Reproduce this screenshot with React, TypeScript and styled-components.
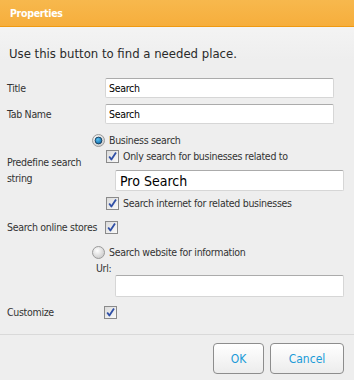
import React from 'react';
import styled, { createGlobalStyle } from 'styled-components';

const GlobalStyle = createGlobalStyle`
  html, body {
    margin: 0;
    padding: 0;
    width: 354px;
    height: 380px;
    overflow: hidden;
  }
  body {
    font-family: "DejaVu Sans Condensed", "DejaVu Sans", "Liberation Sans", sans-serif;
    color: #333;
  }
`;

const Dialog = styled.div`
  width: 354px;
  height: 380px;
  display: flex;
  flex-direction: column;
  background: linear-gradient(#f8f8f8 0px, #eeeeee 60px, #eeeeee 100%);
`;

const Header = styled.div`
  flex: none;
  height: 26px;
  border-bottom: 1px solid #ef9a12;
  background: linear-gradient(#f7b84d, #f6ae3c);
  display: flex;
  align-items: center;
  padding-left: 10px;
  color: #fff;
  font-weight: bold;
  font-size: 10.5px;
  letter-spacing: -0.3px;
`;

const Body = styled.div`
  padding: 0 7px;
  display: flex;
  flex-direction: column;
  flex: 1;
`;

const Intro = styled.div`
  font-size: 13px;
  color: #2a2a2a;
  margin-top: 18px;
  height: 17px;
  line-height: 17px;
  margin-bottom: 16px;
  padding-left: 2px;
`;

const Row = styled.div<{ $mt?: number; $indent?: number }>`
  display: flex;
  align-items: center;
  margin-top: ${(p) => p.$mt ?? 0}px;
  padding-left: ${(p) => p.$indent ?? 0}px;
`;

const Label = styled.div<{ $w?: number }>`
  width: ${(p) => p.$w ?? 98}px;
  flex: none;
  font-size: 10.5px;
  letter-spacing: -0.3px;
  color: #333;
  line-height: 14px;
`;

const TextInput = styled.div<{ $w: number; $h?: number; $big?: boolean }>`
  box-sizing: border-box;
  width: ${(p) => p.$w}px;
  height: ${(p) => p.$h ?? 20}px;
  background: #fff;
  border: 1px solid #d6d6d6;
  border-top-color: #ababab;
  border-radius: 2px;
  display: flex;
  align-items: center;
  padding-left: ${(p) => (p.$big ? 4 : 3)}px;
  font-size: ${(p) => (p.$big ? 14 : 10.5)}px;
  letter-spacing: ${(p) => (p.$big ? 0 : -0.3)}px;
  color: #000;
`;

const OptionText = styled.span`
  font-size: 10.5px;
  letter-spacing: -0.3px;
  color: #333;
  margin-left: 4px;
  line-height: 14px;
`;

const PredefineBlock = styled.div`
  display: flex;
  margin-top: 2px;
`;

const PredefineLabel = styled(Label)`
  width: 99px;
  line-height: 16px;
  padding-top: 5px;
`;

const PredefineOptions = styled.div`
  display: flex;
  flex-direction: column;
`;

const Footer = styled.div`
  flex: none;
  margin-top: auto;
  border-top: 1px solid #d9d9d9;
  height: 46px;
  display: flex;
  justify-content: flex-end;
  align-items: flex-start;
  gap: 6px;
  padding: 8px 10px 0 0;
  box-sizing: border-box;
`;

const Button = styled.button<{ $w: number }>`
  width: ${(p) => p.$w}px;
  height: 31px;
  border: 1px solid #8d8d8d;
  border-radius: 4px;
  background: linear-gradient(#ffffff, #ececec);
  color: #1b9bd8;
  font-family: inherit;
  font-size: 12px;
  padding: 0;
`;

const UrlLabel = styled.div`
  font-size: 10.5px;
  letter-spacing: -0.3px;
  color: #333;
  padding-left: 89px;
  margin-top: 2px;
  line-height: 14px;
`;

const Checkbox = () => (
  <svg width="13" height="13" viewBox="0 0 13 13" style={{ flex: 'none' }}>
    <defs>
      <linearGradient id="cbg" x1="0" y1="0" x2="1" y2="1">
        <stop offset="0" stopColor="#d9d9d9" />
        <stop offset="1" stopColor="#fbfbfb" />
      </linearGradient>
    </defs>
    <rect x="0.5" y="0.5" width="12" height="12" fill="url(#cbg)" stroke="#8a8a8a" />
    <path d="M3.2 6.4 L5.4 9.6 L10 2.6" fill="none" stroke="#2f4fa6" strokeWidth="1.8" strokeLinejoin="round" />
  </svg>
);

const Radio = ({ checked }: { checked?: boolean }) => (
  <svg width="13" height="13" viewBox="0 0 13 13" style={{ flex: 'none' }}>
    <defs>
      <radialGradient id="rg" cx="0.4" cy="0.35" r="0.7">
        <stop offset="0" stopColor="#ffffff" />
        <stop offset="1" stopColor="#c9c9c9" />
      </radialGradient>
      <radialGradient id="rdot" cx="0.4" cy="0.35" r="0.7">
        <stop offset="0" stopColor="#5cc3f2" />
        <stop offset="1" stopColor="#0a66a8" />
      </radialGradient>
    </defs>
    <circle cx="6.5" cy="6.5" r="6" fill="url(#rg)" stroke="#9b9b9b" />
    {checked && <circle cx="6.5" cy="6.5" r="3.4" fill="url(#rdot)" stroke="#1c3b55" strokeWidth="0.9" />}
  </svg>
);

export default function App() {
  return (
    <>
      <GlobalStyle />
      <Dialog>
        <Header>Properties</Header>
        <Body>
          <Intro>Use this button to find a needed place.</Intro>
          <Row>
            <Label>Title</Label>
            <TextInput $w={229}>Search</TextInput>
          </Row>
          <Row $mt={6}>
            <Label>Tab Name</Label>
            <TextInput $w={229}>Search</TextInput>
          </Row>
          <Row $mt={9} $indent={85}>
            <Radio checked />
            <OptionText>Business search</OptionText>
          </Row>
          <PredefineBlock>
            <PredefineLabel>Predefine search string</PredefineLabel>
            <PredefineOptions>
              <Row>
                <Checkbox />
                <OptionText>Only search for businesses related to</OptionText>
              </Row>
              <Row $mt={7} $indent={9}>
                <TextInput $w={229} $h={21} $big>Pro Search</TextInput>
              </Row>
              <Row $mt={5}>
                <Checkbox />
                <OptionText>Search internet for related businesses</OptionText>
              </Row>
            </PredefineOptions>
          </PredefineBlock>
          <Row $mt={10}>
            <Label $w={98}>Search online stores</Label>
            <Checkbox />
          </Row>
          <Row $mt={11} $indent={85}>
            <Radio />
            <OptionText>Search website for information</OptionText>
          </Row>
          <UrlLabel>Url:</UrlLabel>
          <Row $indent={108}>
            <TextInput $w={229} $h={22} />
          </Row>
          <Row $mt={8}>
            <Label $w={97}>Customize</Label>
            <Checkbox />
          </Row>
        </Body>
        <Footer>
          <Button $w={51}>OK</Button>
          <Button $w={74}>Cancel</Button>
        </Footer>
      </Dialog>
    </>
  );
}
